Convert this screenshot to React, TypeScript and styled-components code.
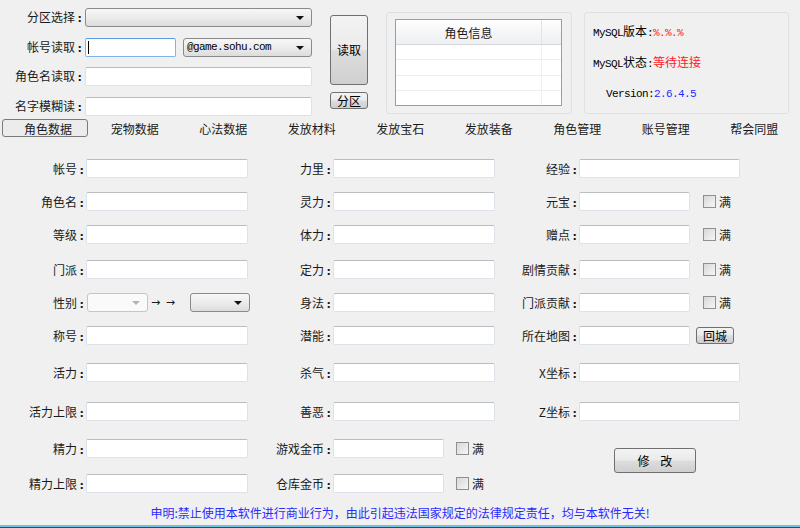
import React from "react";
import styled, { createGlobalStyle } from "styled-components";

const GlobalStyle = createGlobalStyle`
  html, body {
    margin: 0;
    padding: 0;
    background: #f0f0f0;
  }
  body {
    font-family: "Noto Sans CJK SC", "Noto Sans", sans-serif;
    font-size: 12px;
    color: #1a1a1a;
  }
`;

const Window = styled.div`
  width: 800px;
  height: 528px;
  box-sizing: border-box;
  background: #f0f0f0;
  display: flex;
  flex-direction: column;
  overflow: hidden;
  box-shadow: inset 0 -1px 0 #1d5563, inset 0 -3px 0 #6cc2e2;
`;

const Top = styled.div`
  height: 119px;
  box-sizing: border-box;
  padding-top: 8px;
  display: flex;
  align-items: flex-start;
`;

const LoginForm = styled.div`
  width: 312px;
  display: grid;
  grid-template-columns: 85px 1fr;
  grid-auto-rows: 19px;
  row-gap: 10.5px;
  align-items: center;
`;

const LabelBox = styled.span<{ $pad?: number }>`
  text-align: right;
  padding-right: ${(p) => p.$pad ?? 2}px;
  line-height: 19px;
  white-space: nowrap;
  color: #1a1a1a;
`;

const Colon = styled.span`
  display: inline-block;
  width: 7px;
  text-align: right;
  font-family: "DejaVu Sans", sans-serif;
  font-weight: 700;
  font-size: 11px;
`;

const Label = ({ text, pad }: { text: string; pad?: number }) => (
  <LabelBox $pad={pad}>
    {text}
    <Colon>:</Colon>
  </LabelBox>
);

const FieldRow = styled.div<{ $gap?: number }>`
  display: flex;
  align-items: center;
  gap: ${(p) => p.$gap ?? 0}px;
  height: 19px;
`;

const TextBox = styled.div<{ $w?: number; $focus?: boolean }>`
  position: relative;
  width: ${(p) => (p.$w ? `${p.$w}px` : "100%")};
  height: 19px;
  box-sizing: border-box;
  background: #fff;
  border: 1px solid ${(p) => (p.$focus ? "#7eb4ea" : "#dde2e8")};
  border-top-color: ${(p) => (p.$focus ? "#569de5" : "#b9bcc1")};
  border-radius: 2px;
  flex-shrink: 0;
`;

const Caret = styled.span`
  position: absolute;
  left: 2px;
  top: 2px;
  width: 1px;
  height: 13px;
  background: #000;
`;

const Combo = styled.div<{ $w?: number; $disabled?: boolean; $ml?: number }>`
  position: relative;
  width: ${(p) => (p.$w ? `${p.$w}px` : "100%")};
  height: 19px;
  box-sizing: border-box;
  margin-left: ${(p) => p.$ml ?? 0}px;
  border: 1px solid ${(p) => (p.$disabled ? "#c6c6c6" : "#8a8a8a")};
  border-radius: 3px;
  background: ${(p) =>
    p.$disabled ? "#fafafa" : "linear-gradient(#f7f7f7, #ececec 50%, #dcdcdc)"};
  padding-left: 3px;
  display: flex;
  align-items: center;
  flex-shrink: 0;

  &::after {
    content: "";
    position: absolute;
    right: 7px;
    top: 7px;
    border-left: 4px solid transparent;
    border-right: 4px solid transparent;
    border-top: 4px solid ${(p) => (p.$disabled ? "#b4b4b4" : "#111")};
  }
`;

const Mono = styled.span<{ $color?: string }>`
  font-family: "Liberation Mono", "DejaVu Sans Mono", monospace;
  font-size: 11px;
  letter-spacing: -0.6px;
  color: ${(p) => p.$color ?? "#000"};
`;

const ButtonCol = styled.div`
  margin-left: 18px;
  margin-top: 7px;
  display: flex;
  flex-direction: column;
  gap: 7px;
`;

const PushButton = styled.button<{ $w: number; $h: number }>`
  width: ${(p) => p.$w}px;
  height: ${(p) => p.$h}px;
  box-sizing: border-box;
  padding: 0;
  border: 1px solid #707070;
  border-radius: 3px;
  background: linear-gradient(#f3f3f3 0%, #ebebeb 48%, #dddddd 52%, #cfcfcf 100%);
  font-family: "Noto Sans CJK SC", sans-serif;
  font-size: 12px;
  color: #000;
  line-height: 1;
  white-space: pre;
  flex-shrink: 0;
`;

const GroupBox = styled.div<{ $w: number; $ml: number }>`
  width: ${(p) => p.$w}px;
  height: 102px;
  margin-left: ${(p) => p.$ml}px;
  margin-top: 4px;
  box-sizing: border-box;
  border: 1px solid #dce1e6;
  border-radius: 3px;
`;

const ListWrap = styled(GroupBox)`
  padding: 6px 9px 7px 8px;
`;

const ListView = styled.div`
  height: 100%;
  box-sizing: border-box;
  border: 1px solid #9a9ea4;
  background: #fff;
  display: flex;
  flex-direction: column;
`;

const ListHeader = styled.div`
  height: 24px;
  flex-shrink: 0;
  display: flex;
  border-bottom: 1px solid #d5d7db;
  background: linear-gradient(#ffffff, #f5f6f7 50%, #eef0f2);
`;

const HeaderCell = styled.div<{ $w?: number }>`
  ${(p) => (p.$w ? `width: ${p.$w}px;` : "flex: 1;")}
  display: flex;
  align-items: center;
  justify-content: center;
  font-size: 12px;
  color: #1a1a1a;
  border-right: 1px solid #e2e4e7;
  &:last-child {
    border-right: none;
  }
`;

const ListRow = styled.div`
  flex: 1;
  display: flex;
  border-bottom: 1px solid #efefef;
  &:last-child {
    border-bottom: none;
  }
`;

const ListCell = styled.div<{ $w?: number }>`
  ${(p) => (p.$w ? `width: ${p.$w}px;` : "flex: 1;")}
  border-right: 1px solid #efefef;
  &:last-child {
    border-right: none;
  }
`;

const InfoBox = styled(GroupBox)`
  padding: 10px 0 0 8px;
  display: flex;
  flex-direction: column;
  gap: 14.5px;
`;

const InfoLine = styled.div<{ $indent?: number }>`
  height: 16px;
  line-height: 16px;
  padding-left: ${(p) => p.$indent ?? 0}px;
  white-space: nowrap;
  color: #000;
`;

const Status = styled.span`
  color: #ff1a1a;
  font-size: 12px;
`;

const TabBar = styled.div`
  height: 18px;
  padding-left: 2px;
  display: grid;
  grid-template-columns: repeat(9, 88.5px);
  align-items: center;
`;

const Tab = styled.div<{ $active?: boolean }>`
  width: ${(p) => (p.$active ? "86px" : "88.5px")};
  height: 18px;
  box-sizing: border-box;
  display: flex;
  align-items: center;
  justify-content: center;
  padding-left: ${(p) => (p.$active ? "6px" : "0")};
  font-size: 12px;
  color: #1a1a1a;
  border: 1px solid ${(p) => (p.$active ? "#7a7a7a" : "transparent")};
  border-radius: 3px;
  background: ${(p) => (p.$active ? "#ececec" : "transparent")};
`;

const Form = styled.div`
  margin-top: 22px;
  display: grid;
  grid-template-columns: 86px 162px 85px 162px 84px 1fr;
  grid-template-rows: 33px 33px 35px 33px 33px 37px 39px 37px 35px 19px;
  align-items: start;
`;

const Check = styled.span<{ $ml: number }>`
  width: 13px;
  height: 13px;
  box-sizing: border-box;
  margin-left: ${(p) => p.$ml}px;
  border: 1px solid #8e8f8f;
  background: linear-gradient(135deg, #d8d8d8, #f6f6f6);
  flex-shrink: 0;
`;

const CheckText = styled.span`
  margin-left: 3px;
  font-size: 12px;
  color: #1a1a1a;
`;

const Arrows = styled.span`
  width: 42px;
  flex-shrink: 0;
  padding-left: 3px;
  box-sizing: border-box;
  font-family: "DejaVu Sans", sans-serif;
  font-size: 11px;
  color: #1a1a1a;
  letter-spacing: 1px;
`;

const Footer = styled.div`
  margin-top: 10px;
  height: 20px;
  line-height: 20px;
  text-align: center;
  color: #2a2aff;
  font-size: 12px;
`;

type Field =
  | { kind: "text"; label: string; w: number }
  | { kind: "check"; label: string; ml: number }
  | { kind: "gender"; label: string }
  | { kind: "map"; label: string }
  | { kind: "submit" }
  | { kind: "empty" };

const rows: Field[][] = [
  [
    { kind: "text", label: "帐号", w: 162 },
    { kind: "text", label: "力里", w: 162 },
    { kind: "text", label: "经验", w: 161 },
  ],
  [
    { kind: "text", label: "角色名", w: 162 },
    { kind: "text", label: "灵力", w: 162 },
    { kind: "check", label: "元宝", ml: 13 },
  ],
  [
    { kind: "text", label: "等级", w: 162 },
    { kind: "text", label: "体力", w: 162 },
    { kind: "check", label: "赠点", ml: 13 },
  ],
  [
    { kind: "text", label: "门派", w: 162 },
    { kind: "text", label: "定力", w: 162 },
    { kind: "check", label: "剧情贡献", ml: 13 },
  ],
  [
    { kind: "gender", label: "性别" },
    { kind: "text", label: "身法", w: 162 },
    { kind: "check", label: "门派贡献", ml: 13 },
  ],
  [
    { kind: "text", label: "称号", w: 162 },
    { kind: "text", label: "潜能", w: 162 },
    { kind: "map", label: "所在地图" },
  ],
  [
    { kind: "text", label: "活力", w: 162 },
    { kind: "text", label: "杀气", w: 162 },
    { kind: "text", label: "X坐标", w: 161 },
  ],
  [
    { kind: "text", label: "活力上限", w: 162 },
    { kind: "text", label: "善恶", w: 162 },
    { kind: "text", label: "Z坐标", w: 161 },
  ],
  [
    { kind: "text", label: "精力", w: 162 },
    { kind: "check", label: "游戏金币", ml: 12 },
    { kind: "submit" },
  ],
  [
    { kind: "text", label: "精力上限", w: 162 },
    { kind: "check", label: "仓库金币", ml: 12 },
    { kind: "empty" },
  ],
];

const tabs = [
  "角色数据",
  "宠物数据",
  "心法数据",
  "发放材料",
  "发放宝石",
  "发放装备",
  "角色管理",
  "账号管理",
  "帮会同盟",
];

const SubmitCell = styled.div`
  padding: 9px 0 0 35px;
`;

const FormCell = ({ f }: { f: Field }) => {
  switch (f.kind) {
    case "text":
      return (
        <>
          <Label text={f.label} />
          <FieldRow>
            <TextBox $w={f.w} />
          </FieldRow>
        </>
      );
    case "check":
      return (
        <>
          <Label text={f.label} />
          <FieldRow>
            <TextBox $w={111} />
            <Check $ml={f.ml} />
            <CheckText>满</CheckText>
          </FieldRow>
        </>
      );
    case "gender":
      return (
        <>
          <Label text={f.label} />
          <FieldRow>
            <Combo $w={61} $ml={1} $disabled />
            <Arrows>→ →</Arrows>
            <Combo $w={60} />
          </FieldRow>
        </>
      );
    case "map":
      return (
        <>
          <Label text={f.label} />
          <FieldRow $gap={6}>
            <TextBox $w={111} />
            <PushButton $w={38} $h={17}>
              回城
            </PushButton>
          </FieldRow>
        </>
      );
    case "submit":
      return (
        <>
          <span />
          <SubmitCell>
            <PushButton $w={82} $h={25}>
              {"修    改"}
            </PushButton>
          </SubmitCell>
        </>
      );
    default:
      return (
        <>
          <span />
          <span />
        </>
      );
  }
};

export default function App() {
  return (
    <Window>
      <GlobalStyle />
      <Top>
        <LoginForm>
          <Label text="分区选择" pad={3} />
          <Combo />
          <Label text="帐号读取" pad={3} />
          <FieldRow $gap={7}>
            <TextBox $w={91} $focus>
              <Caret />
            </TextBox>
            <Combo $w={129}>
              <Mono>@game.sohu.com</Mono>
            </Combo>
          </FieldRow>
          <Label text="角色名读取" pad={3} />
          <TextBox />
          <Label text="名字模糊读" pad={3} />
          <TextBox />
        </LoginForm>

        <ButtonCol>
          <PushButton $w={38} $h={70}>
            读取
          </PushButton>
          <PushButton $w={38} $h={17}>
            分区
          </PushButton>
        </ButtonCol>

        <ListWrap $w={186} $ml={18}>
          <ListView>
            <ListHeader>
              <HeaderCell>角色信息</HeaderCell>
              <HeaderCell $w={19} />
            </ListHeader>
            {[0, 1, 2, 3].map((i) => (
              <ListRow key={i}>
                <ListCell />
                <ListCell $w={19} />
              </ListRow>
            ))}
          </ListView>
        </ListWrap>

        <InfoBox $w={205} $ml={12}>
          <InfoLine>
            <Mono>MySQL</Mono>版本<Mono>:</Mono>
            <Mono $color="#ff1a1a">%.%.%</Mono>
          </InfoLine>
          <InfoLine>
            <Mono>MySQL</Mono>状态<Mono>:</Mono>
            <Status>等待连接</Status>
          </InfoLine>
          <InfoLine $indent={13}>
            <Mono>Version:</Mono>
            <Mono $color="#2a2aff">2.6.4.5</Mono>
          </InfoLine>
        </InfoBox>
      </Top>

      <TabBar>
        {tabs.map((t, i) => (
          <Tab key={t} $active={i === 0}>
            {t}
          </Tab>
        ))}
      </TabBar>

      <Form>
        {rows.map((r, ri) =>
          r.map((f, ci) => <FormCell key={`${ri}-${ci}`} f={f} />)
        )}
      </Form>

      <Footer>
        申明:禁止使用本软件进行商业行为，由此引起违法国家规定的法律规定责任，均与本软件无关!
      </Footer>
    </Window>
  );
}
